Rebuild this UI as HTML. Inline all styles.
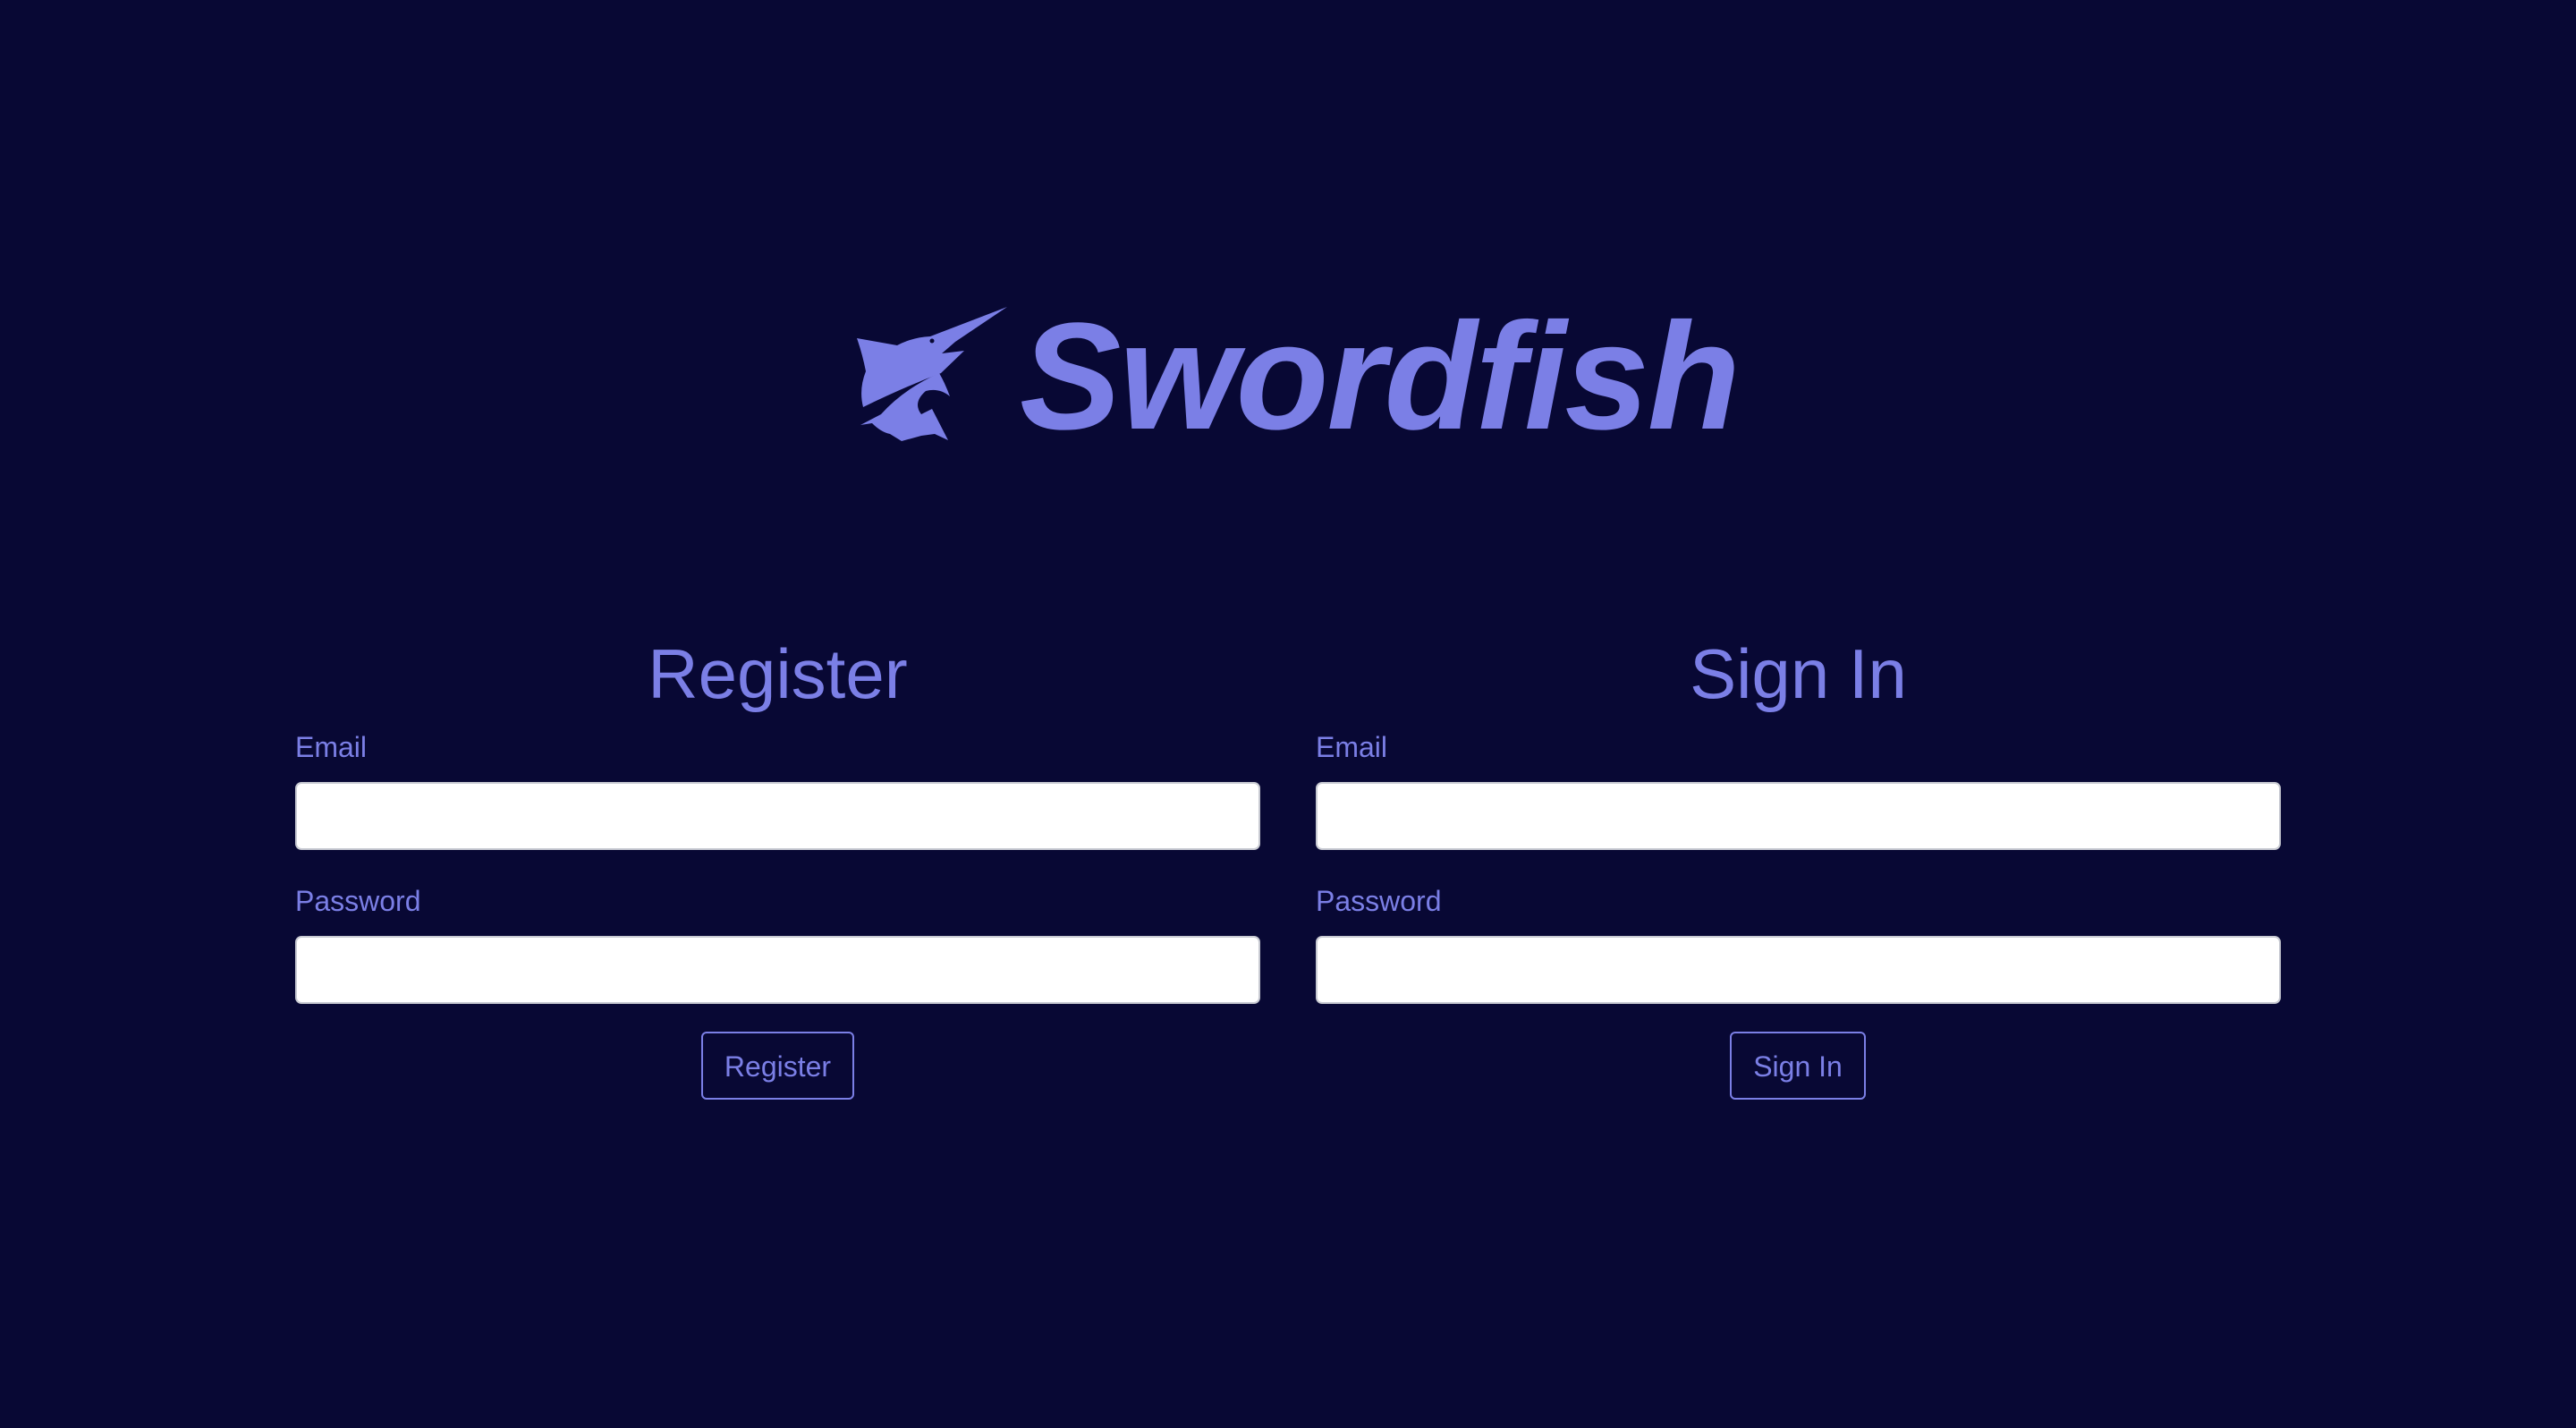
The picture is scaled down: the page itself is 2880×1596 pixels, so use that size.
<!DOCTYPE html>
<html><head><meta charset="utf-8"><style>
html,body{margin:0;padding:0}
body{width:2880px;height:1596px;background:#080834;position:relative;overflow:hidden;font-family:"Liberation Sans",Arial,sans-serif;color:#7b7fe6}
.abs{position:absolute}
.logo{left:1140px;top:336px;font-size:170px;font-weight:bold;font-style:italic;line-height:1;letter-spacing:-2px}
h2{position:absolute;margin:0;font-weight:normal;font-size:78px;line-height:1;width:1079px;text-align:center;top:714px}
.lbl{position:absolute;font-size:32px;line-height:1}
.inp{position:absolute;background:#fff;border:2px solid #c8cad2;border-radius:7px;width:1075px;height:72px;box-sizing:content-box}
.btn{position:absolute;border:2px solid #7b7fe6;border-radius:6px;height:72px;font-size:32px;line-height:74px;text-align:center;top:1153px}
</style></head><body>
<svg class="abs" style="left:950px;top:335px" width="180" height="165" viewBox="0 0 180 165">
<path fill="#7b7fe6" d="M8,43 L53,51 Q70,42 90,41 L176,8 L118,47 L103,60 L128,57 L102,82 Q60,98 15,120 Q10,100 18,80 Q14,60 8,43 Z"/>
<circle cx="92" cy="46" r="2.5" fill="#080834"/>
<path fill="#7b7fe6" d="M100,82 Q60,100 35,128 L12,140 L25,138 Q35,148 45,150 L58,158 L80,152 L95,150 L110,157 L92,122 L80,128 Q70,115 85,102 Q100,98 112,108 Q106,92 100,82 Z"/>
</svg>
<div class="abs logo">Swordfish</div>
<h2 style="left:330px">Register</h2>
<h2 style="left:1471px">Sign In</h2>
<div class="lbl" style="left:330px;top:819px">Email</div>
<div class="lbl" style="left:330px;top:991px">Password</div>
<div class="lbl" style="left:1471px;top:819px">Email</div>
<div class="lbl" style="left:1471px;top:991px">Password</div>
<div class="inp" style="left:330px;top:874px"></div>
<div class="inp" style="left:330px;top:1046px"></div>
<div class="inp" style="left:1471px;top:874px"></div>
<div class="inp" style="left:1471px;top:1046px"></div>
<div class="btn" style="left:784px;width:167px">Register</div>
<div class="btn" style="left:1934px;width:148px">Sign In</div>
</body></html>
